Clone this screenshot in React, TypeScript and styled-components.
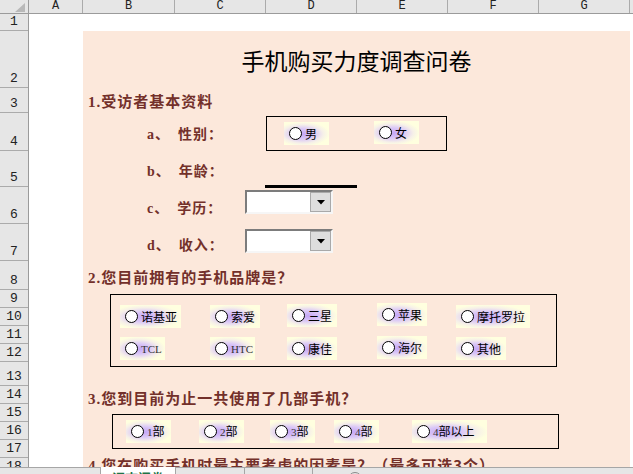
import React from 'react';
import styled, { createGlobalStyle } from 'styled-components';

const GlobalStyle = createGlobalStyle`
  html, body {
    margin: 0;
    padding: 0;
    overflow: hidden;
    background: #ffffff;
  }
  body {
    font-family: "Noto Sans CJK SC", sans-serif;
  }
`;

const COLUMNS = [
    { name: 'A', width: 54 },
    { name: 'B', width: 92 },
    { name: 'C', width: 91 },
    { name: 'D', width: 91 },
    { name: 'E', width: 91 },
    { name: 'F', width: 91 },
    { name: 'G', width: 91 },
    { name: 'H', width: 64 },
];

// row heights in px, from row 1 down
const ROW_HEIGHTS = [17, 57, 25, 38, 36, 37, 37, 29, 18, 18, 18, 18, 24, 18, 18, 18, 18, 18];

const BRANDS = [
    { label: '诺基亚', width: 61 },
    { label: '索爱', width: 50 },
    { label: '三星', width: 50, dy: -1 },
    { label: '苹果', width: 50, dy: -2 },
    { label: '摩托罗拉', width: 74 },
    { label: 'TCL', width: 45, latin: true },
    { label: 'HTC', width: 45, latin: true },
    { label: '康佳', width: 50 },
    { label: '海尔', width: 50, dy: -1 },
    { label: '其他', width: 50 },
];

const COUNTS = [
    { num: '1', width: 45, ml: 0 },
    { num: '2', width: 45, ml: 28 },
    { num: '3', width: 45, ml: 26 },
    { num: '4', width: 45, ml: 19 },
    { num: '4', suffix: '以上', width: 75, ml: 33 },
];

function Radio({ children, width, ml = 0, dy = 0 }: { children: React.ReactNode; width: number; ml?: number; dy?: number }) {
    return (
        <OptionButton $w={width} $ml={ml} $dy={dy}>
            <Circle />
            <OptionText>{children}</OptionText>
        </OptionButton>
    );
}

function Combo({ top }: { top: number }) {
    return (
        <ComboBox $top={top}>
            <ComboField />
            <ComboButton>
                <svg width="8" height="5" viewBox="0 0 8 5">
                    <polygon points="0,0 8,0 4,4.5" fill="#000" />
                </svg>
            </ComboButton>
        </ComboBox>
    );
}

function App() {
    return (
        <Window>
            <GlobalStyle />
            <ColumnHeader>
                <Corner>
                    <svg width="10" height="9" viewBox="0 0 10 9">
                        <polygon points="10,0 10,9 0,9" fill="#b9b9b9" />
                    </svg>
                </Corner>
                {COLUMNS.map(c => (
                    <ColumnCell key={c.name} $w={c.width}>{c.name}</ColumnCell>
                ))}
            </ColumnHeader>

            <Body>
                <RowHeaders>
                    {ROW_HEIGHTS.map((h, i) => (
                        <RowCell key={i} $h={h}>{i + 1}</RowCell>
                    ))}
                </RowHeaders>

                <Canvas>
                    <BlankRow />
                    <SheetRow>
                        <ColumnA />
                        <Panel>
                            <Title>手机购买力度调查问卷</Title>

                            <Heading $h={25}><Num>1.</Num>受访者基本资料</Heading>
                            <Items>
                                <ItemRow $h={38}>
                                    <ItemLabel><Num>a</Num>、&ensp;性别：</ItemLabel>
                                    <GenderBox>
                                        <Radio width={45}>男</Radio>
                                        <Radio width={45} ml={45} dy={-2}>女</Radio>
                                    </GenderBox>
                                </ItemRow>
                                <ItemRow $h={36}>
                                    <ItemLabel><Num>b</Num>、&ensp;年龄：</ItemLabel>
                                    <AgeLine />
                                </ItemRow>
                                <ItemRow $h={37}>
                                    <ItemLabel><Num>c</Num>、&ensp;学历：</ItemLabel>
                                    <Combo top={3} />
                                </ItemRow>
                                <ItemRow $h={37}>
                                    <ItemLabel><Num>d</Num>、&ensp;收入：</ItemLabel>
                                    <Combo top={5} />
                                </ItemRow>
                            </Items>

                            <Heading $h={29} $pt={2}><Num>2.</Num>您目前拥有的手机品牌是？</Heading>
                            <BrandBox>
                                {BRANDS.map(b => (
                                    <Radio key={b.label} width={b.width} dy={b.dy}>
                                        {b.latin ? <Latin>{b.label}</Latin> : b.label}
                                    </Radio>
                                ))}
                            </BrandBox>

                            <Heading $h={26} $mt={18}><Num>3.</Num>您到目前为止一共使用了几部手机？</Heading>
                            <CountBox>
                                {COUNTS.map((c, i) => (
                                    <Radio key={i} width={c.width} ml={c.ml}>
                                        <Latin>{c.num}</Latin>部{c.suffix}
                                    </Radio>
                                ))}
                            </CountBox>

                            <Heading $h={26} $mt={3}><Num>4.</Num>您在购买手机时最主要考虑的因素是？（最多可选3个）</Heading>
                        </Panel>
                    </SheetRow>
                </Canvas>
            </Body>

            <TabBar>
                <TabNav />
                <Tab $w={76} $active>调查问卷</Tab>
                <Tab $w={69} />
                <Tab $w={68} />
                <NewSheet />
            </TabBar>
        </Window>
    );
}

const Window = styled.div`
    width: 633px;
    height: 474px;
    display: flex;
    flex-direction: column;
    overflow: hidden;
    background: #ffffff;
`

const ColumnHeader = styled.div`
    flex: 0 0 14px;
    display: flex;
    box-sizing: border-box;
    background: #e6e6e6;
    border-bottom: 1px solid #9b9b9b;
`

const Corner = styled.div`
    width: 29px;
    flex: none;
    box-sizing: border-box;
    border-right: 1px solid #9b9b9b;
    display: flex;
    align-items: flex-end;
    justify-content: flex-end;
    padding: 0 3px 1px 0;
`

const ColumnCell = styled.div<{ $w: number }>`
    width: ${p => p.$w}px;
    flex: none;
    box-sizing: border-box;
    border-right: 1px solid #ababab;
    font-family: "Liberation Mono", monospace;
    font-size: 12px;
    line-height: 13px;
    color: #222;
    text-align: center;
`

const Body = styled.div`
    flex: 0 0 453px;
    display: flex;
    overflow: hidden;
`

const RowHeaders = styled.div`
    width: 29px;
    flex: none;
    box-sizing: border-box;
    background: #e6e6e6;
    border-right: 1px solid #9b9b9b;
    display: flex;
    flex-direction: column;
`

const RowCell = styled.div<{ $h: number }>`
    flex: 0 0 ${p => p.$h}px;
    box-sizing: border-box;
    border-bottom: 1px solid #ababab;
    display: flex;
    align-items: flex-end;
    justify-content: center;
    padding-bottom: 2px;
    font-family: "Liberation Mono", monospace;
    font-size: 13px;
    line-height: 12px;
    color: #222;
`

const Canvas = styled.div`
    flex: 1;
    display: flex;
    flex-direction: column;
`

const BlankRow = styled.div`
    flex: 0 0 17px;
`

const SheetRow = styled.div`
    flex: 1;
    display: flex;
`

const ColumnA = styled.div`
    width: 54px;
    flex: none;
`

const Panel = styled.div`
    width: 547px;
    flex: none;
    background: #fce8db;
    display: flex;
    flex-direction: column;
`

const Title = styled.div`
    height: 57px;
    box-sizing: border-box;
    padding-top: 18px;
    font-size: 23px;
    line-height: 23px;
    text-align: center;
    color: #000;
`

const Heading = styled.div<{ $h: number; $pt?: number; $mt?: number }>`
    height: ${p => p.$h}px;
    margin-top: ${p => p.$mt || 0}px;
    padding: ${p => p.$pt || 0}px 0 0 5px;
    box-sizing: border-box;
    line-height: ${p => p.$h - (p.$pt || 0)}px;
    font-family: "Noto Sans CJK SC", sans-serif;
    font-size: 15px;
    font-weight: bold;
    letter-spacing: 1px;
    color: #73302a;
    white-space: nowrap;
`

const Num = styled.span`
    font-family: "Liberation Serif", serif;
    font-weight: bold;
    letter-spacing: 1px;
`

const Items = styled.div`
    padding-left: 64px;
    display: flex;
    flex-direction: column;
`

const ItemRow = styled.div<{ $h: number }>`
    height: ${p => p.$h}px;
    display: flex;
    align-items: center;
`

const ItemLabel = styled.div`
    width: 98px;
    flex: none;
    padding-top: 2px;
    font-size: 14px;
    font-weight: bold;
    letter-spacing: 1px;
    color: #73302a;
    white-space: nowrap;
`

const GenderBox = styled.div`
    align-self: flex-start;
    margin: 3px 0 0 21px;
    width: 181px;
    height: 35px;
    box-sizing: border-box;
    border: 1px solid #000;
    padding-left: 17px;
    display: flex;
    align-items: center;
`

const AgeLine = styled.div`
    align-self: flex-end;
    margin: 0 0 -1px 20px;
    width: 92px;
    height: 3px;
    background: #000;
`

const ComboBox = styled.div<{ $top: number }>`
    align-self: flex-start;
    margin-top: ${p => p.$top}px;
    width: 88px;
    height: 24px;
    box-sizing: border-box;
    border: 2px solid;
    border-color: #7c7c7c #f6f6f6 #f6f6f6 #7c7c7c;
    background: #fff;
    display: flex;
`

const ComboField = styled.div`
    flex: 1;
`

const ComboButton = styled.div`
    width: 21px;
    box-sizing: border-box;
    border: 1px solid #a9a9a9;
    background: #dedede;
    display: flex;
    align-items: center;
    justify-content: center;
`

const BrandBox = styled.div`
    margin: 4px 0 0 27px;
    width: 447px;
    box-sizing: border-box;
    border: 1px solid #000;
    padding: 10px 0 6px 9px;
    display: grid;
    grid-template-columns: 90px 77px 90px 79px auto;
    grid-auto-rows: 23px;
    row-gap: 9px;
    align-items: start;
`

const CountBox = styled.div`
    margin: 3px 0 0 29px;
    width: 447px;
    height: 35px;
    box-sizing: border-box;
    border: 1px solid #000;
    padding-left: 13px;
    display: flex;
    align-items: center;
`

const OptionButton = styled.div<{ $w: number; $ml: number; $dy: number }>`
    width: ${p => p.$w}px;
    height: 23px;
    flex: none;
    margin-left: ${p => p.$ml}px;
    margin-top: ${p => p.$dy}px;
    box-sizing: border-box;
    padding-left: 5px;
    display: flex;
    align-items: center;
    background: radial-gradient(ellipse at 42% 52%, #c4a6f6 0%, #dac7f7 30%, #f6f0e8 55%, #ffffdf 72%);
`

const Circle = styled.span`
    width: 13px;
    height: 13px;
    flex: none;
    box-sizing: border-box;
    border: 1px solid #000;
    border-radius: 50%;
    background: #fff;
    margin-right: 3px;
`

const OptionText = styled.span`
    font-size: 12px;
    line-height: 14px;
    color: #000;
    white-space: nowrap;
`

const Latin = styled.span`
    font-family: "Liberation Serif", serif;
    font-size: 11px;
    color: #333;
`

const TabBar = styled.div`
    flex: 0 0 24px;
    display: flex;
    box-sizing: border-box;
    background: #e6e6e6;
    border-top: 1px solid #a6a6a6;
`

const TabNav = styled.div`
    width: 100px;
    flex: none;
`

const Tab = styled.div<{ $w: number; $active?: boolean }>`
    width: ${p => p.$w}px;
    flex: none;
    box-sizing: border-box;
    border-left: ${p => p.$active ? '1px solid #a6a6a6' : 'none'};
    border-right: 1px solid #a6a6a6;
    background: ${p => p.$active ? '#ffffff' : 'transparent'};
    margin-top: ${p => p.$active ? '-1px' : '0'};
    padding-top: 3px;
    font-size: 13px;
    line-height: 16px;
    font-weight: bold;
    text-align: center;
    color: #217346;
`

const NewSheet = styled.div`
    width: 14px;
    height: 14px;
    flex: none;
    margin: 4px 0 0 35px;
    box-sizing: border-box;
    border: 1px solid #8a8a8a;
    border-radius: 50%;
`

export default App;
